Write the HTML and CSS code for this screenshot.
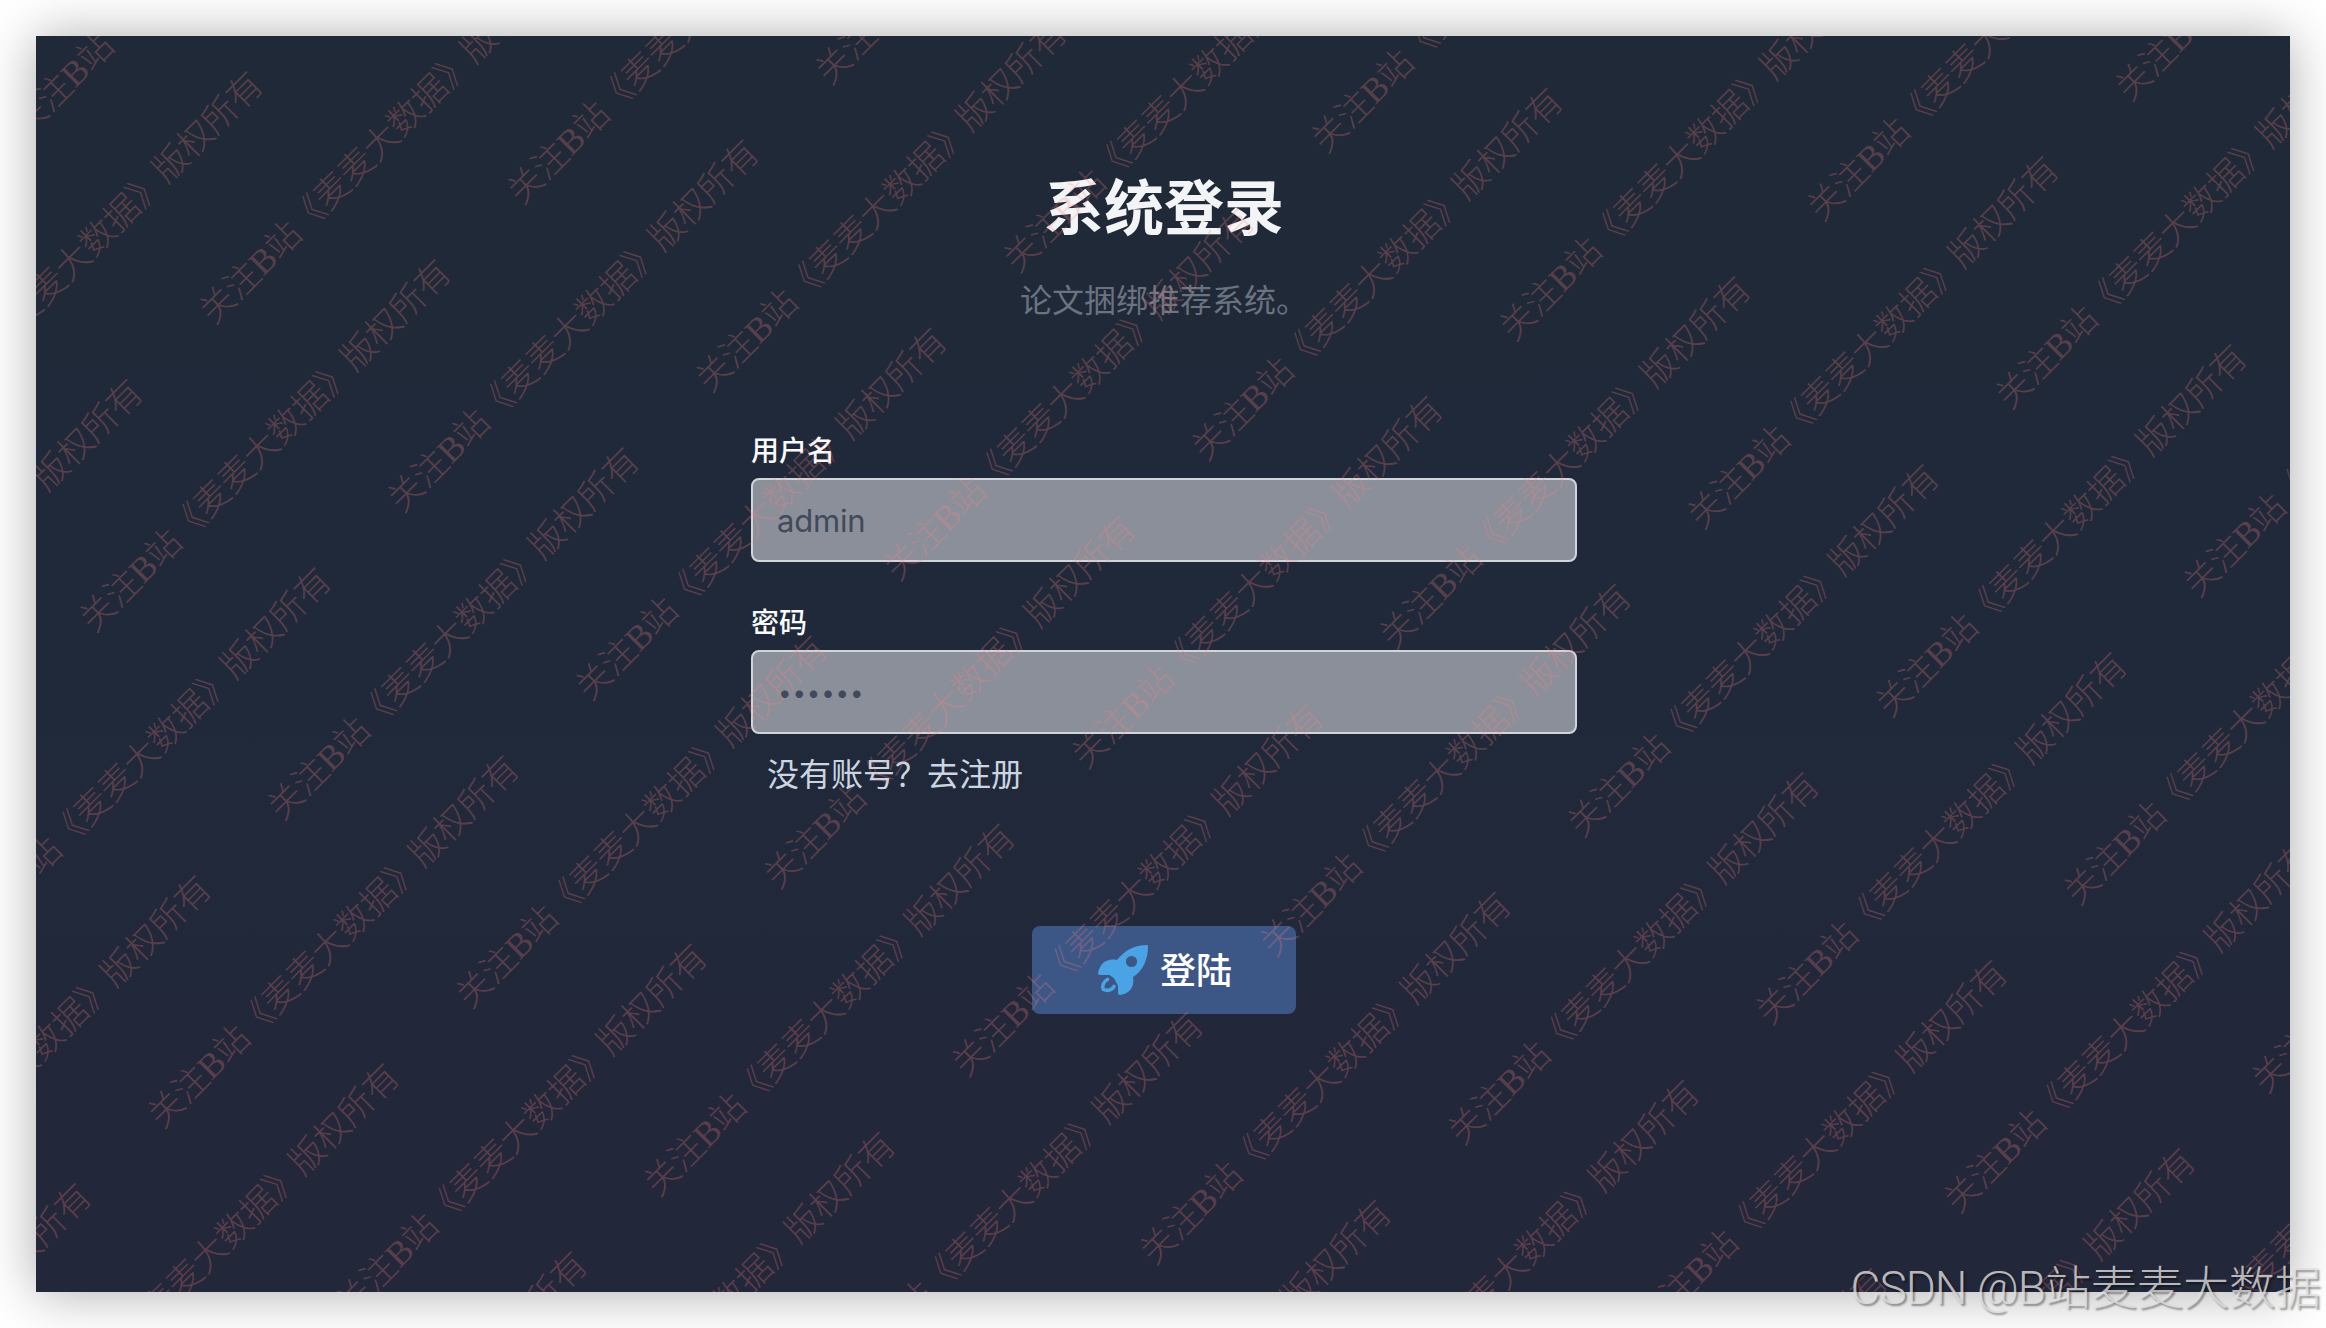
FILE: index.html
```html
<!DOCTYPE html>
<html lang="zh-CN">
  <head>
    <meta charset="UTF-8" />
    <meta name="viewport" content="width=device-width, initial-scale=1.0" />
    <title>系统登录</title>
    <link rel="stylesheet" href="styles.css">
  </head>
  <body>
    <svg class="mark mark_page"></svg>
    <div class="container">
      <h1 class="title">系统登录</h1>
      <p class="subtitle">论文捆绑推荐系统。</p>
      <form class="login_form" onsubmit="return false">
        <label class="label" for="username">用户名</label>
        <input id="username" class="field" type="text" value="admin" />
        <label class="label" for="password">密码</label>
        <input id="password" class="field field_password" type="password" value="123456" />
        <a class="register">没有账号？去注册</a>
        <button class="login_button">
          <svg class="rocket" viewBox="0 0 50 50">
            <path d="M49 0C37 0 27 5 19 15C9 13 2 18 0 28Q0 30 2 30H12L20 36V48Q20 50 22 50C31 49 37 42 35 32C45 26 50 14 50 1Q50 0 49 0Z" />
            <path d="M10 29L16 33L20 41L24 30Z" />
            <circle class="rocket_window" cx="33.5" cy="16.5" r="5.6" />
            <path class="rocket_flame" d="M9.500 34.500C5.500 36.500 3.500 41 5.500 44.500C9.500 46.500 14 45 16 41.500" />
          </svg>
          <span class="login_text">登陆</span>
        </button>
      </form>
      <svg class="mark mark_card"></svg>
    </div>
    <div class="credit"><span class="credit_latin">CSDN @B</span>站麦麦大数据</div>
    <script src="script.js"></script>
  </body>
</html>
```
FILE: styles.css
```css
body {
  margin: 0;
  height: 1328px;
  box-sizing: border-box;
  padding: 36px;
  position: relative;
  overflow: hidden;
  background-color: #fff;
  font-family: Inter, "Noto Sans CJK SC", sans-serif;
}

.container {
  position: relative;
  height: 1256px;
  box-sizing: border-box;
  padding-left: 2px;
  display: flex;
  flex-direction: column;
  align-items: center;
  background: linear-gradient(#1f2937, #20293a 55%, #222739 90%);
  box-shadow: 0 1px 50px rgba(0, 0, 0, 0.33);
}

.title {
  margin: 127px 0 0;
  height: 90px;
  line-height: 90px;
  font-size: 60px;
  font-weight: 600;
  color: #f3f4f6;
}

.subtitle {
  margin: 24px 0 0;
  height: 48px;
  line-height: 48px;
  font-size: 32px;
  color: #6b7280;
}

.login_form {
  width: 826px;
  margin-top: 105px;
  display: flex;
  flex-direction: column;
}

.label {
  height: 42px;
  line-height: 42px;
  margin-bottom: 6px;
  font-size: 28px;
  font-weight: 500;
  color: #f9fafb;
}

.field {
  height: 84px;
  box-sizing: border-box;
  margin: 0 0 40px;
  padding: 0 24px;
  border: 2px solid #d1d5db;
  border-radius: 8px;
  outline: none;
  background-color: #8b8f99;
  color: #414a5a;
  font-family: inherit;
  font-size: 31px;
  letter-spacing: -0.2px;
}

.field_password {
  margin-bottom: 17px;
  padding: 0 25px;
  font-size: 24px;
  letter-spacing: 0.9px;
}

.register {
  height: 48px;
  line-height: 48px;
  margin-left: 16px;
  font-size: 32px;
  color: #cbd5e1;
}

.login_button {
  width: 264px;
  height: 88px;
  margin: 127px auto 0;
  padding: 0 0 0 2px;
  display: flex;
  align-items: center;
  justify-content: center;
  gap: 12px;
  border: none;
  border-radius: 8px;
  background-color: #3c5785;
  color: #fff;
  font-family: inherit;
  font-size: 36px;
  font-weight: 500;
}

.login_text {
  margin-bottom: 4px;
}

.rocket {
  width: 50px;
  height: 50px;
  fill: #4aa3e5;
}

.rocket_window {
  fill: #3c5785;
}

.rocket_flame {
  fill: none;
  stroke: #4aa3e5;
  stroke-width: 3.6;
  stroke-linecap: round;
  stroke-linejoin: round;
}

.mark {
  position: absolute;
  pointer-events: none;
  overflow: hidden;
  font-family: "Noto Sans CJK SC", sans-serif;
  font-size: 35px;
  font-weight: 300;
  letter-spacing: -0.4px;
}

.mark_latin {
  font-family: "Liberation Serif", serif;
  font-weight: 400;
}

.mark_page {
  left: 0;
  top: 0;
  width: 2326px;
  height: 1328px;
  fill: rgba(0, 0, 0, 0.015);
}

.mark_card {
  left: 0;
  top: 0;
  width: 100%;
  height: 100%;
  fill: rgba(255, 130, 130, 0.27);
}

.credit {
  position: absolute;
  right: 5px;
  bottom: 6px;
  line-height: 68px;
  font-family: "Noto Sans CJK SC", sans-serif;
  font-size: 46px;
  font-weight: 300;
  white-space: nowrap;
  color: rgba(225, 225, 225, 0.8);
  text-shadow: 2px 2px 2px rgba(0, 0, 0, 0.4);
}

.credit_latin {
  font-family: Roboto, sans-serif;
  letter-spacing: -1px;
}
```
FILE: script.js
```js
// diagonal copyright text, every other row shifted by half a step
const MARK_TEXT = ["关注", "B", "站《麦麦大数据》版权所有"];
const STEP_X = 605;
const STEP_Y = 133;

const drawMark = (svg, left, top) => {
  const ns = "http://www.w3.org/2000/svg";
  const group = document.createElementNS(ns, "g");
  group.setAttribute("transform", `translate(${218 - left} ${305 - top}) rotate(-45)`);
  for (let row = -4; row <= 17; row++) {
    const shift = row % 2 === 0 ? 0 : STEP_X / 2;
    for (let col = -4; col <= 4; col++) {
      const x = col * STEP_X + shift - 17.5;
      const y = row * STEP_Y + 12;
      // skip what falls outside the page
      const px = 218 + (x + y) * Math.SQRT1_2;
      const py = 305 + (y - x) * Math.SQRT1_2;
      if (px > 2340 || px < -400 || py < -30 || py > 1720) continue;
      const text = document.createElementNS(ns, "text");
      text.setAttribute("x", x);
      text.setAttribute("y", y);
      MARK_TEXT.forEach((part) => {
        const span = document.createElementNS(ns, "tspan");
        if (part === "B") span.setAttribute("class", "mark_latin");
        span.textContent = part;
        text.appendChild(span);
      });
      group.appendChild(text);
    }
  }
  svg.appendChild(group);
};

drawMark(document.querySelector(".mark_page"), 0, 0);
drawMark(document.querySelector(".mark_card"), 36, 36);
```
